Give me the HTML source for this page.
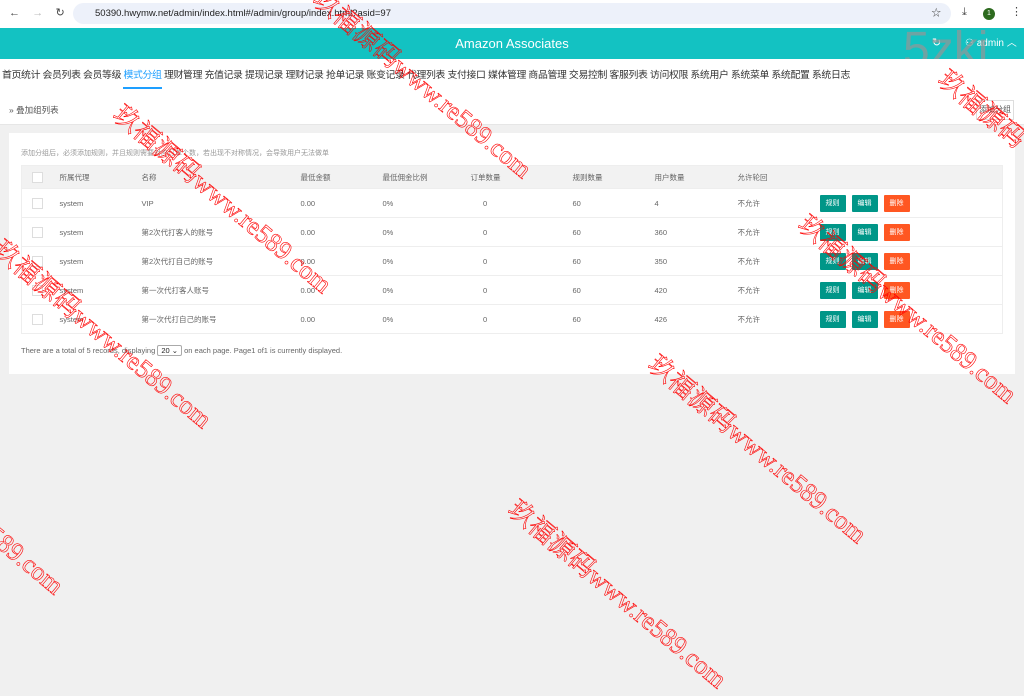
<!DOCTYPE html>
<html><head><meta charset="utf-8"><style>
*{margin:0;padding:0;box-sizing:border-box}
body{width:1024px;height:589px;overflow:hidden;background:#f0f0f0;font-family:"Liberation Sans","Noto Sans CJK SC",sans-serif;position:relative;color:#666}
.bar{position:absolute;left:0;top:0;width:1024px;height:28px;background:#fff}
.url{position:absolute;left:73px;top:3px;width:878px;height:21px;border-radius:11px;background:#edf1fa;font-size:9.5px;color:#222;line-height:21px;padding-left:22px}
.hdr{position:absolute;left:0;top:28px;width:1024px;height:31px;background:#13c2c2;color:#fff;font-size:13px;text-align:center;line-height:31px}
.nav{position:absolute;left:0;top:59px;width:1024px;height:66px;background:#fff;border-bottom:1px solid #e6e6e6}
.nav .m{position:absolute;left:2px;top:8px;font-size:9.9px;color:#333;white-space:nowrap;letter-spacing:-.35px}
.nav .m span.a{color:#1e9fff;border-bottom:2px solid #1e9fff;padding-bottom:6px}
.card{position:absolute;left:9px;top:133px;width:1006px;height:241px;background:#fff}
table{position:absolute;left:12px;top:32px;width:982px;border-collapse:collapse;font-size:7.5px;color:#666;table-layout:fixed}
th{background:#f2f2f2;height:23px;text-align:left;font-weight:normal}
td{height:29px;border-top:1px solid #eee}
tr td:first-child,tr th:first-child{padding-left:10px}
table{border:1px solid #eee}
.cb{display:inline-block;width:11px;height:11px;border:1px solid #ddd;background:#fff;vertical-align:middle}
.b{display:inline-block;width:26px;height:17px;line-height:17px;text-align:center;color:#fff;background:#009688;margin-right:6px;font-size:7px;border-radius:1px}
.r{background:#ff5722}
.wm{position:absolute;color:transparent;-webkit-text-stroke:0.6px #f00;font-family:"Liberation Serif","Noto Serif CJK SC",serif;font-size:26px;white-space:nowrap;transform-origin:0 0;transform:rotate(40deg)}
</style></head><body>
<div class="bar"><span style="position:absolute;left:9px;top:6px;font-size:11px;color:#444">←&nbsp;&nbsp;&nbsp;&nbsp;<span style="color:#bbb">→</span>&nbsp;&nbsp;&nbsp;&nbsp;↻</span>
<div class="url">50390.hwymw.net/admin/index.html#/admin/group/index.html?asid=97<span style="position:absolute;right:10px;color:#444">☆</span></div>
<span style="position:absolute;left:962px;top:6px;font-size:11px;color:#444">⤓</span>
<span style="position:absolute;left:983px;top:8px;width:12px;height:12px;border-radius:6px;background:#2d6a1f;color:#fff;font-size:7px;text-align:center;line-height:12px">1</span>
<span style="position:absolute;left:1011px;top:5px;font-size:11px;color:#444">⋮</span></div>
<div class="hdr">Amazon Associates<span style="position:absolute;left:932px;font-size:11px">↻</span><span style="position:absolute;left:965px;font-size:10px">⚇ admin ︿</span></div>
<div style="position:absolute;left:903px;top:22px;font-size:48px;color:rgba(150,150,150,.7);font-family:'Liberation Sans',sans-serif">5zki</div>
<div class="nav"><div class="m">首页统计 会员列表 会员等级 <span class="a">模式分组</span> 理财管理 充值记录 提现记录 理财记录 抢单记录 账变记录 代理列表 支付接口 媒体管理 商品管理 交易控制 客服列表 访问权限 系统用户 系统菜单 系统配置 系统日志</div>
<div style="position:absolute;left:9px;top:45px;font-size:8.5px;color:#555">» 叠加组列表</div>
<div style="position:absolute;left:976px;top:41px;width:38px;height:20px;border:1px solid #ddd;font-size:8px;line-height:18px;text-align:center;color:#555">添加分组</div></div>
<div class="card">
<div style="position:absolute;left:12px;top:15px;font-size:7px;color:#999">添加分组后，必须添加规则，并且规则需要对应订单个数，若出现不对称情况，会导致用户无法做单</div>
<table>
<tr><th style="width:38px"><span class="cb"></span></th><th style="width:82px">所属代理</th><th style="width:159px">名称</th><th style="width:82px">最低金额</th><th style="width:88px">最低佣金比例</th><th style="width:102px">订单数量</th><th style="width:82px">规则数量</th><th style="width:83px">用户数量</th><th style="width:82px">允许轮回</th><th></th></tr>
<tr><td><span class="cb"></span></td><td>system</td><td>VIP</td><td>0.00</td><td>0%</td><td>&nbsp;&nbsp;&nbsp;&nbsp;&nbsp;&nbsp;0</td><td>60</td><td>4</td><td>不允许</td><td><span class="b">规则</span><span class="b">编辑</span><span class="b r">删除</span></td></tr>
<tr><td><span class="cb"></span></td><td>system</td><td>第2次代打客人的账号</td><td>0.00</td><td>0%</td><td>&nbsp;&nbsp;&nbsp;&nbsp;&nbsp;&nbsp;0</td><td>60</td><td>360</td><td>不允许</td><td><span class="b">规则</span><span class="b">编辑</span><span class="b r">删除</span></td></tr>
<tr><td><span class="cb"></span></td><td>system</td><td>第2次代打自己的账号</td><td>0.00</td><td>0%</td><td>&nbsp;&nbsp;&nbsp;&nbsp;&nbsp;&nbsp;0</td><td>60</td><td>350</td><td>不允许</td><td><span class="b">规则</span><span class="b">编辑</span><span class="b r">删除</span></td></tr>
<tr><td><span class="cb"></span></td><td>system</td><td>第一次代打客人账号</td><td>0.00</td><td>0%</td><td>&nbsp;&nbsp;&nbsp;&nbsp;&nbsp;&nbsp;0</td><td>60</td><td>420</td><td>不允许</td><td><span class="b">规则</span><span class="b">编辑</span><span class="b r">删除</span></td></tr>
<tr><td><span class="cb"></span></td><td>system</td><td>第一次代打自己的账号</td><td>0.00</td><td>0%</td><td>&nbsp;&nbsp;&nbsp;&nbsp;&nbsp;&nbsp;0</td><td>60</td><td>426</td><td>不允许</td><td><span class="b">规则</span><span class="b">编辑</span><span class="b r">删除</span></td></tr>
</table>
<div style="position:absolute;left:12px;top:212px;font-size:7.5px;color:#666">There are a total of 5 records, displaying <span style="display:inline-block;border:1px solid #aaa;border-radius:2px;padding:0 3px;color:#222">20 ⌄</span> on each page. Page1 of1 is currently displayed.</div>
</div>
<div class="wm" style="left:330px;top:-20px">玖福源码www.re589.com</div>
<div class="wm" style="left:130px;top:95px">玖福源码www.re589.com</div>
<div class="wm" style="left:10px;top:230px">玖福源码www.re589.com</div>
<div class="wm" style="left:665px;top:345px">玖福源码www.re589.com</div>
<div class="wm" style="left:525px;top:490px">玖福源码www.re589.com</div>
<div class="wm" style="left:815px;top:205px">玖福源码www.re589.com</div>
<div class="wm" style="left:955px;top:60px">玖福源码</div>
<div class="wm" style="left:0px;top:520px">589.com</div>
</body></html>
